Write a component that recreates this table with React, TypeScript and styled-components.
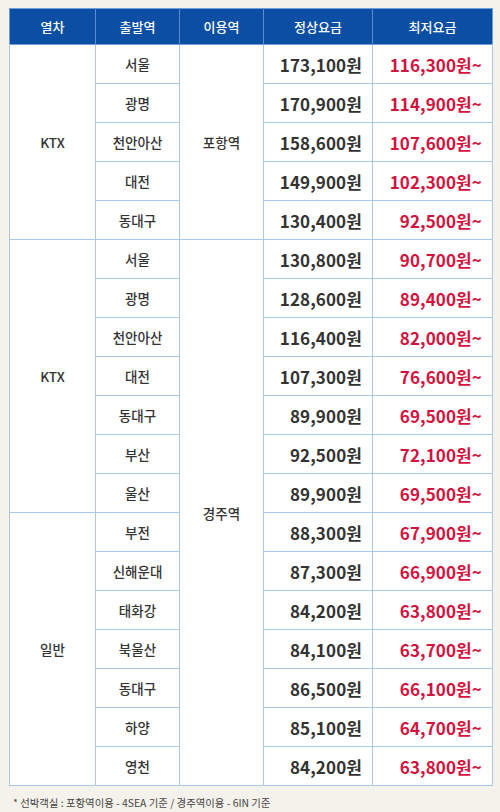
import React from 'react';
import styled, { createGlobalStyle } from 'styled-components';

const GlobalStyle = createGlobalStyle`
  body {
    margin: 0;
    background: #f5f2eb;
    font-family: "Noto Sans CJK KR", "Noto Sans", sans-serif;
  }
`;

const Page = styled.div`
  padding: 8px 8px 0 9px;
`;

const Table = styled.table`
  width: 483px;
  border-collapse: collapse;
  table-layout: fixed;
  background: #fff;
  border: 1px solid #6f9fd8;
`;

const HeadCell = styled.th`
  height: 35px;
  padding: 0;
  background: #0a4fa3;
  color: #fff;
  font-size: 13px;
  font-weight: 500;
  border-left: 1px solid #5d8dcc;
  &:first-child { border-left: none; }
`;

const Cell = styled.td<{ $align?: 'center' | 'right'; $group?: boolean }>`
  height: 38px;
  padding: 0 ${(p) => (p.$align === 'right' ? '10px' : '0')} 0 0;
  text-align: ${(p) => p.$align ?? 'center'};
  border: 1px solid #a9c8ec;
  border-top-color: ${(p) => (p.$group ? '#6f9fd8' : '#a9c8ec')};
  font-size: 13.5px;
  font-weight: 500;
  color: #333;
`;

const Price = styled.span<{ $sale?: boolean }>`
  font-size: 17px;
  font-weight: 700;
  letter-spacing: 0.1px;
  color: ${(p) => (p.$sale ? '#d3123e' : '#333')};
`;

const Note = styled.p`
  margin: 9px 0 0 4px;
  font-size: 10.4px;
  color: #444;
`;

interface Row {
  from: string;
  normal: string;
  low: string;
}

interface Group {
  train: string;
  rows: Row[];
}

const groups: Group[] = [
  {
    train: 'KTX',
    rows: [
      { from: '서울', normal: '173,100원', low: '116,300원~' },
      { from: '광명', normal: '170,900원', low: '114,900원~' },
      { from: '천안아산', normal: '158,600원', low: '107,600원~' },
      { from: '대전', normal: '149,900원', low: '102,300원~' },
      { from: '동대구', normal: '130,400원', low: '92,500원~' },
    ],
  },
  {
    train: 'KTX',
    rows: [
      { from: '서울', normal: '130,800원', low: '90,700원~' },
      { from: '광명', normal: '128,600원', low: '89,400원~' },
      { from: '천안아산', normal: '116,400원', low: '82,000원~' },
      { from: '대전', normal: '107,300원', low: '76,600원~' },
      { from: '동대구', normal: '89,900원', low: '69,500원~' },
      { from: '부산', normal: '92,500원', low: '72,100원~' },
      { from: '울산', normal: '89,900원', low: '69,500원~' },
    ],
  },
  {
    train: '일반',
    rows: [
      { from: '부전', normal: '88,300원', low: '67,900원~' },
      { from: '신해운대', normal: '87,300원', low: '66,900원~' },
      { from: '태화강', normal: '84,200원', low: '63,800원~' },
      { from: '북울산', normal: '84,100원', low: '63,700원~' },
      { from: '동대구', normal: '86,500원', low: '66,100원~' },
      { from: '하양', normal: '85,100원', low: '64,700원~' },
      { from: '영천', normal: '84,200원', low: '63,800원~' },
    ],
  },
];

// 이용역 spans: 포항역 covers group 0, 경주역 covers groups 1-2
const destinations = [
  { gi: 0, name: '포항역', span: 5 },
  { gi: 1, name: '경주역', span: 14 },
];

export default function App() {
  return (
    <Page>
      <GlobalStyle />
      <Table>
        <colgroup>
          <col style={{ width: 86 }} />
          <col style={{ width: 84 }} />
          <col style={{ width: 84 }} />
          <col style={{ width: 109 }} />
          <col style={{ width: 120 }} />
        </colgroup>
        <thead>
          <tr>
            <HeadCell>열차</HeadCell>
            <HeadCell>출발역</HeadCell>
            <HeadCell>이용역</HeadCell>
            <HeadCell>정상요금</HeadCell>
            <HeadCell>최저요금</HeadCell>
          </tr>
        </thead>
        <tbody>
          {groups.map((g, gi) =>
            g.rows.map((r, ri) => {
              const dest = ri === 0 ? destinations.find((d) => d.gi === gi) : undefined;
              const first = ri === 0;
              return (
                <tr key={`${gi}-${ri}`}>
                  {first && (
                    <Cell rowSpan={g.rows.length} $group>
                      {g.train}
                    </Cell>
                  )}
                  <Cell $group={first}>{r.from}</Cell>
                  {dest && (
                    <Cell rowSpan={dest.span} $group>
                      {dest.name}
                    </Cell>
                  )}
                  <Cell $align="right" $group={first}>
                    <Price>{r.normal}</Price>
                  </Cell>
                  <Cell $align="right" $group={first}>
                    <Price $sale>{r.low}</Price>
                  </Cell>
                </tr>
              );
            })
          )}
        </tbody>
      </Table>
      <Note>* 선박객실 : 포항역이용 - 4SEA 기준 / 경주역이용 - 6IN 기준</Note>
    </Page>
  );
}
